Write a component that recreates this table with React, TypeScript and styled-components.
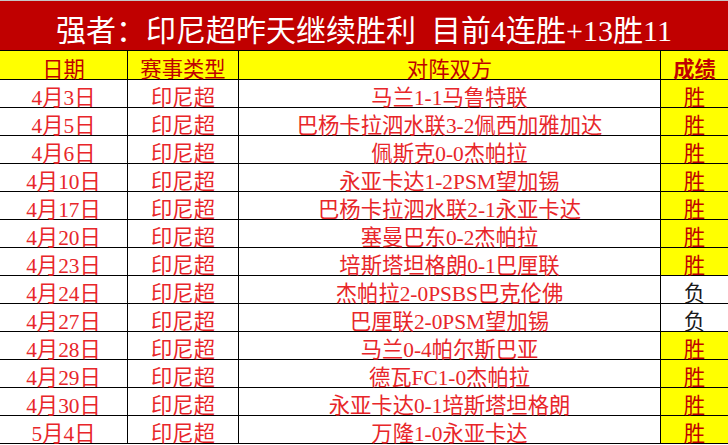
import styled, { createGlobalStyle } from 'styled-components';

type matchType = {
  date: string;
  league: string;
  match: string;
  win: boolean;
};

const matches: matchType[] = [
  { date: '4月3日', league: '印尼超', match: '马兰1-1马鲁特联', win: true },
  { date: '4月5日', league: '印尼超', match: '巴杨卡拉泗水联3-2佩西加雅加达', win: true },
  { date: '4月6日', league: '印尼超', match: '佩斯克0-0杰帕拉', win: true },
  { date: '4月10日', league: '印尼超', match: '永亚卡达1-2PSM望加锡', win: true },
  { date: '4月17日', league: '印尼超', match: '巴杨卡拉泗水联2-1永亚卡达', win: true },
  { date: '4月20日', league: '印尼超', match: '塞曼巴东0-2杰帕拉', win: true },
  { date: '4月23日', league: '印尼超', match: '培斯塔坦格朗0-1巴厘联', win: true },
  { date: '4月24日', league: '印尼超', match: '杰帕拉2-0PSBS巴克伦佛', win: false },
  { date: '4月27日', league: '印尼超', match: '巴厘联2-0PSM望加锡', win: false },
  { date: '4月28日', league: '印尼超', match: '马兰0-4帕尔斯巴亚', win: true },
  { date: '4月29日', league: '印尼超', match: '德瓦FC1-0杰帕拉', win: true },
  { date: '4月30日', league: '印尼超', match: '永亚卡达0-1培斯塔坦格朗', win: true },
  { date: '5月4日', league: '印尼超', match: '万隆1-0永亚卡达', win: true },
];

function App() {
  return (
    <>
      <GlobalStyle />
      <Sheet>
        <Title>强者：印尼超昨天继续胜利  目前4连胜+13胜11</Title>
        <Table>
          <HeadCell>日期</HeadCell>
          <HeadCell>赛事类型</HeadCell>
          <HeadCell>对阵双方</HeadCell>
          <HeadCell $last $bold>
            成绩
          </HeadCell>
          {matches.map((m) => (
            <Row key={m.date}>
              <Cell>{m.date}</Cell>
              <Cell>{m.league}</Cell>
              <Cell>{m.match}</Cell>
              <ResultCell $win={m.win}>{m.win ? '胜' : '负'}</ResultCell>
            </Row>
          ))}
        </Table>
      </Sheet>
    </>
  );
}

const GlobalStyle = createGlobalStyle`
    body {
        margin: 0;
        background: #ffffff;
        font-family: "Liberation Serif", "Noto Sans CJK SC", serif;
    }
`;

const Sheet = styled.div`
    width: 728px;
    display: flex;
    flex-direction: column;
`;

const Title = styled.div`
    height: 51px;
    box-sizing: border-box;
    border-top: 1px solid #c6c6c6;
    border-bottom: 1px solid #000000;
    background-color: #c00000;
    color: #ffffff;
    font-size: 30px;
    white-space: pre;
    display: flex;
    align-items: center;
    justify-content: center;
    padding-top: 5px;
`;

const Table = styled.div`
    display: grid;
    grid-template-columns: 128px 111px 422px 67px;
    grid-template-rows: 29px;
    grid-auto-rows: 28px;
`;

const Row = styled.div`
    display: contents;
`;

const Cell = styled.div`
    display: flex;
    align-items: center;
    justify-content: center;
    box-sizing: border-box;
    border-right: 1px solid #000000;
    border-bottom: 1px solid #000000;
    padding-top: 4px;
    font-size: 21.33px;
    color: #e8262a;
    white-space: nowrap;
`;

const HeadCell = styled(Cell)<{ $last?: boolean; $bold?: boolean }>`
    background-color: #ffff00;
    color: #c00000;
    border-right: ${(p) => (p.$last ? 'none' : '1px solid #000000')};
    font-weight: ${(p) => (p.$bold ? 700 : 400)};
`;

const ResultCell = styled(Cell)<{ $win: boolean }>`
    border-right: none;
    background-color: ${(p) => (p.$win ? '#ffff00' : '#ffffff')};
    color: ${(p) => (p.$win ? '#c00000' : '#1a1a1a')};
`;

export default App;
